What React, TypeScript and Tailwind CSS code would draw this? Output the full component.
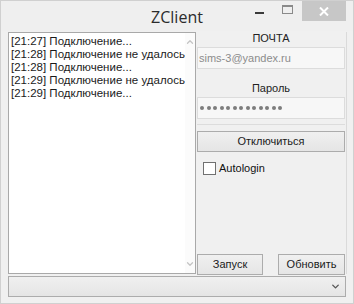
import { ChevronDown, ChevronUp } from "lucide-react";

const log = [
  "[21:27] Подключение...",
  "[21:28] Подключение не удалось",
  "[21:28] Подключение...",
  "[21:29] Подключение не удалось",
  "[21:29] Подключение...",
];

const ui = { fontFamily: '"Liberation Sans", Arial, sans-serif' };

const WinButton = ({ children, className = "" }: { children: React.ReactNode; className?: string }) => (
  <button
    className={
      "h-[21px] border border-[#acacac] bg-gradient-to-b from-[#f0f0f0] to-[#e5e5e5] text-[11px] text-[#1a1a1a] flex items-center justify-center " +
      className
    }
  >
    {children}
  </button>
);

export default function App() {
  return (
    <div
      className="w-[354px] h-[304px] bg-[#efefef] border border-[#d0d0d0] flex flex-col overflow-hidden"
      style={ui}
    >
      {/* title bar */}
      <div className="h-[30px] flex items-start relative shrink-0">
        <div
          className="absolute left-0 right-0 top-[4px] text-center text-[16px] text-[#2b2b2b]"
          style={{ fontFamily: '"Open Sans", "Noto Sans", sans-serif' }}
        >
          ZClient
        </div>
        <div className="ml-auto flex items-start mr-[7px] relative">
          <div className="w-[27px] h-[20px] flex items-center justify-center">
            <div className="w-[9px] h-[2px] bg-[#3a3a3a] mt-[4px] -ml-[6px]" />
          </div>
          <div className="w-[26px] h-[20px] flex items-center justify-center">
            <div className="w-[11px] h-[9px] border border-[#8a8a8a] border-t-2 -mt-[3px] -ml-[4px]" />
          </div>
          <div className="w-[44px] h-[20px] bg-[#c7c7c7] flex items-center justify-center">
            <svg width="10" height="9" viewBox="0 0 10 9">
              <path d="M1 0.5 L9 8.5 M9 0.5 L1 8.5" stroke="#fff" strokeWidth="2" />
            </svg>
          </div>
        </div>
      </div>

      {/* client area */}
      <div className="flex-1 flex flex-col pl-[7px] pr-[6px] pt-[1px] bg-[#f0f0f0]">
        <div className="flex h-[242px]">
          {/* log list */}
          <div className="w-[188px] border border-[#a9a9a9] bg-white flex">
            <div className="flex-1 pl-[2px] pt-[2px] text-[11.5px] leading-[13px] text-[#1a1a1a]">
              {log.map((l, i) => (
                <div key={i} className="whitespace-nowrap">
                  {l}
                </div>
              ))}
            </div>
            <div className="w-[17px] flex flex-col justify-between items-center py-[4px] bg-[#fbfbfb]">
              <ChevronUp size={10} strokeWidth={3} className="text-[#c4c4c4]" />
              <ChevronDown size={10} strokeWidth={3} className="text-[#c4c4c4]" />
            </div>
          </div>

          {/* right panel */}
          <div className="flex-1 flex flex-col border-r border-[#dadada] pl-[1px] pr-[1px]">
            <div className="text-center text-[11px] text-[#222] h-[15px] leading-[12px]">ПОЧТА</div>
            <div className="h-[22px] border border-[#dcdcdc] bg-[#f7f7f7] flex items-center pl-[1px] text-[11px] text-[#8c8c8c]">
              sims-3@yandex.ru
            </div>
            <div className="text-center text-[11px] text-[#222] mt-[11px] h-[17px]">Пароль</div>
            <div className="h-[22px] border border-[#dcdcdc] bg-[#f7f7f7] flex items-center pl-[2px] gap-[2.5px]">
              {Array.from({ length: 13 }).map((_, i) => (
                <div key={i} className="w-[4px] h-[4px] rounded-full bg-[#7d7d7d]" />
              ))}
            </div>
            <div className="border-t border-[#dcdcdc] mt-[5px] pt-[6px]">
              <WinButton className="w-full">Отключиться</WinButton>
            </div>
            <label className="flex items-center gap-[3px] ml-[6px] mt-[8px] text-[11px] text-[#111]">
              <span className="w-[13px] h-[13px] border border-[#707070] bg-white" />
              Autologin
            </label>
            <div className="mt-auto flex justify-between mb-[-1px]">
              <WinButton className="w-[66px]">Запуск</WinButton>
              <WinButton className="w-[67px]">Обновить</WinButton>
            </div>
          </div>
        </div>

        {/* combo */}
        <div className="mt-[2px] h-[21px] border border-[#acacac] bg-gradient-to-b from-[#f0f0f0] to-[#e5e5e5] flex items-center justify-end pr-[4px] mr-[1px]">
          <ChevronDown size={11} strokeWidth={3} className="text-[#555]" />
        </div>
      </div>
    </div>
  );
}
